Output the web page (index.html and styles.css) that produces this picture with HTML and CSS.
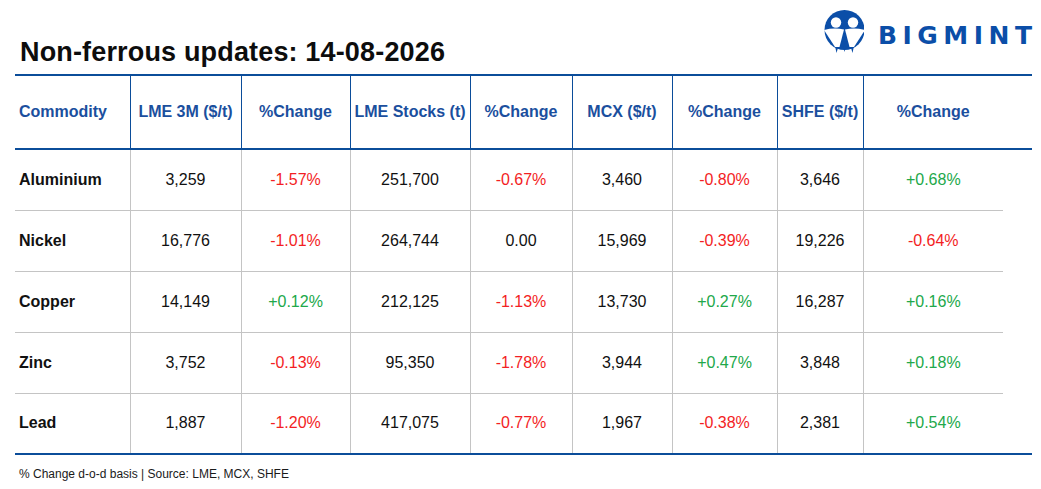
FILE: index.html
```html
<!DOCTYPE html>
<html lang="en">
<head>
<meta charset="utf-8">
<title>Non-ferrous updates</title>
<link rel="stylesheet" href="styles.css">
</head>
<body>
<div class="page">
  <header class="top">
    <h1 class="title">Non-ferrous updates: 14-08-2026</h1>
    <div class="logo">
      <svg class="logo-mark" width="40" height="44" viewBox="0 0 40 44" aria-hidden="true">
        <circle cx="20.5" cy="20" r="20" fill="#0b4ea8"/>
        <polygon points="11,36 12.5,43 14.5,36" fill="#0b4ea8"/>
        <polygon points="19,36 20.5,42 22,36" fill="#0b4ea8"/>
        <polygon points="26.5,36 28.5,43 30,36" fill="#0b4ea8"/>
        <circle cx="12" cy="12.5" r="5.2" fill="#fff"/>
        <circle cx="29" cy="12.5" r="5.2" fill="#fff"/>
        <path d="M0 20 Q10 17.5 20 19.5 L15.5 37 L11 37 Z" fill="#fff"/>
        <path d="M21 19.5 Q31 17.5 41 20 L30 37 L25.5 37 Z" fill="#fff"/>
        <polygon points="20.5,21 22.5,30 20.5,35 18.5,30" fill="#0b4ea8"/>
      </svg>
      <span class="logo-text">BIGMINT</span>
    </div>
  </header>

  <table class="grid">
    <colgroup>
      <col class="c-name"><col class="c-lme"><col class="c-pct1"><col class="c-stk"><col class="c-pct2">
      <col class="c-mcx"><col class="c-pct3"><col class="c-shfe"><col class="c-pct4"><col class="c-pad">
    </colgroup>
    <thead>
      <tr>
        <th class="first">Commodity</th>
        <th>LME 3M ($/t)</th>
        <th>%Change</th>
        <th>LME Stocks (t)</th>
        <th>%Change</th>
        <th>MCX ($/t)</th>
        <th>%Change</th>
        <th>SHFE ($/t)</th>
        <th class="last">%Change</th>
        <th class="pad"></th>
      </tr>
    </thead>
    <tbody>
      <tr>
        <td class="first">Aluminium</td><td>3,259</td><td class="neg">-1.57%</td><td>251,700</td><td class="neg">-0.67%</td>
        <td>3,460</td><td class="neg">-0.80%</td><td>3,646</td><td class="pos last">+0.68%</td><td class="pad"></td>
      </tr>
      <tr>
        <td class="first">Nickel</td><td>16,776</td><td class="neg">-1.01%</td><td>264,744</td><td>0.00</td>
        <td>15,969</td><td class="neg">-0.39%</td><td>19,226</td><td class="neg last">-0.64%</td><td class="pad"></td>
      </tr>
      <tr>
        <td class="first">Copper</td><td>14,149</td><td class="pos">+0.12%</td><td>212,125</td><td class="neg">-1.13%</td>
        <td>13,730</td><td class="pos">+0.27%</td><td>16,287</td><td class="pos last">+0.16%</td><td class="pad"></td>
      </tr>
      <tr>
        <td class="first">Zinc</td><td>3,752</td><td class="neg">-0.13%</td><td>95,350</td><td class="neg">-1.78%</td>
        <td>3,944</td><td class="pos">+0.47%</td><td>3,848</td><td class="pos last">+0.18%</td><td class="pad"></td>
      </tr>
      <tr>
        <td class="first">Lead</td><td>1,887</td><td class="neg">-1.20%</td><td>417,075</td><td class="neg">-0.77%</td>
        <td>1,967</td><td class="neg">-0.38%</td><td>2,381</td><td class="pos last">+0.54%</td><td class="pad"></td>
      </tr>
    </tbody>
  </table>

  <p class="note">% Change d-o-d basis | Source: LME, MCX, SHFE</p>
</div>
</body>
</html>
```

FILE: styles.css
```css
* { box-sizing: border-box; }

html, body {
  margin: 0;
  padding: 0;
  background: #ffffff;
}

body {
  font-family: "Liberation Sans", Arial, sans-serif;
  color: #111111;
}

.page {
  width: 1041px;
  height: 489px;
  padding: 0 9px 0 15px;
}

.top {
  display: flex;
  justify-content: space-between;
  align-items: flex-start;
  height: 74px;
}

.title {
  margin: 0;
  padding: 36px 0 0 5px;
  font-size: 27px;
  line-height: 32px;
  font-weight: 700;
  letter-spacing: 0.16px;
  color: #0d0d0d;
}

.logo {
  display: flex;
  align-items: flex-start;
  gap: 14px;
  padding-top: 10px;
}

.logo-mark {
  display: block;
}

.logo-text {
  margin-top: 13px;
  margin-right: -5.5px;
  font-family: "DejaVu Sans", "Liberation Sans", sans-serif;
  font-size: 25px;
  line-height: 25px;
  font-weight: 700;
  letter-spacing: 5.5px;
  color: #0b4ea8;
}

.grid {
  width: 1017px;
  border-collapse: collapse;
  table-layout: fixed;
  border-top: 2px solid #0b4d9a;
  border-bottom: 2px solid #0b4d9a;
}

.c-name { width: 115px; }
.c-lme { width: 111px; }
.c-pct1 { width: 109px; }
.c-stk { width: 120px; }
.c-pct2 { width: 102px; }
.c-mcx { width: 100px; }
.c-pct3 { width: 105px; }
.c-shfe { width: 86px; }
.c-pct4 { width: 140px; }
.c-pad { width: 29px; }

th {
  height: 74px;
  padding: 0;
  font-size: 16px;
  font-weight: 700;
  color: #1b4f9e;
  text-align: center;
  border-right: 1px solid #0b4d9a;
  border-bottom: 2px solid #0b4d9a;
  white-space: nowrap;
}

td {
  height: 61px;
  padding: 0;
  font-size: 16px;
  text-align: center;
  color: #111111;
  border-right: 1px solid #c4c4c4;
  border-bottom: 1px solid #c4c4c4;
}

tbody tr:last-child td {
  border-bottom: none;
}

th.first, td.first {
  text-align: left;
  padding-left: 4px;
}

td.first {
  font-weight: 700;
}

th.last, td.last, th.pad, td.pad {
  border-right: none;
}

td.pad {
  border-bottom: none;
}

.neg { color: #f31e24; }
.pos { color: #21a84a; }

.note {
  margin: 12px 0 0 4px;
  font-size: 12px;
  line-height: 14px;
  color: #1a1a1a;
}
```
